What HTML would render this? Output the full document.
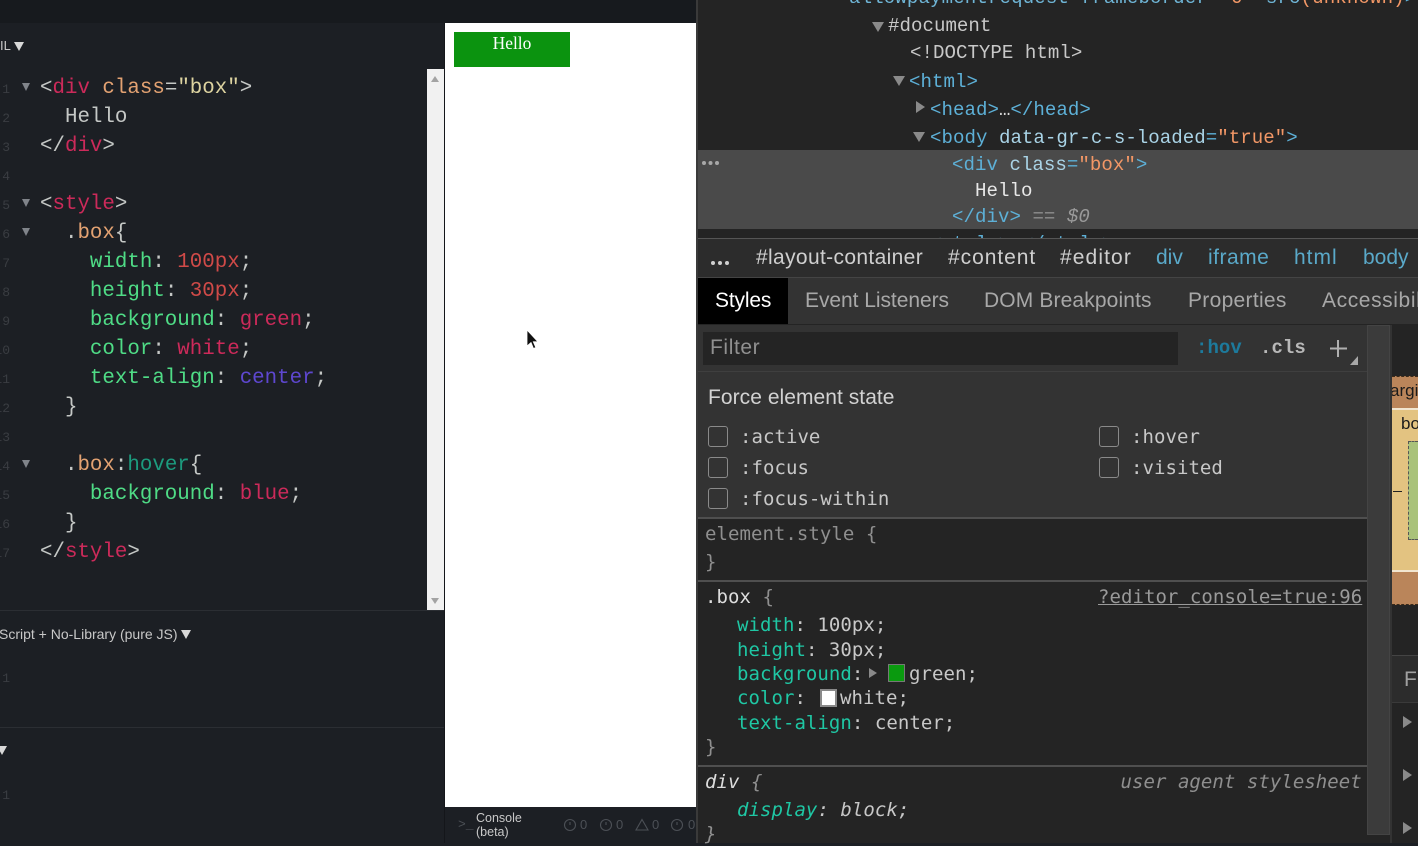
<!DOCTYPE html>
<html><head><meta charset="utf-8"><style>
html,body{margin:0;padding:0;width:1418px;height:843px;overflow:hidden;background:#1c1f24}
div,span.a{position:absolute}
.t{position:absolute;white-space:pre;line-height:24px;height:24px}
.e{font:20.8px/29px "Liberation Mono",monospace;height:29px;line-height:29px;color:#c5c8c6;position:absolute;left:40px;white-space:pre;margin-top:2px}
.n{font:13px/14px "Liberation Mono",monospace;color:#3a3d42;position:absolute;width:20px;text-align:right;left:-10px;margin-top:2px}
.f{position:absolute;left:22px;width:0;height:0;border-left:4.5px solid transparent;border-right:4.5px solid transparent;border-top:8px solid #80848a}
.r{color:#cc2a5a}.o{color:#e3a272}.s{color:#ddd3a0}.g{color:#4fdc86}.v{color:#d04a48}.p{color:#5e47d0}.h{color:#1c9b7e}
.d{font:19.1px/24px "Liberation Mono",monospace;color:#c8c8c8;letter-spacing:.03px}
.m{font:19px/24px "DejaVu Sans Mono",monospace;color:#c8c8c8;letter-spacing:.05px}
.u{font:21px/24px "Liberation Sans",sans-serif;color:#c8c8c8}
.b{color:#5db0d7}.q{color:#f29766}.c{color:#35d4c7}.k{color:#1fc7a4}.y{color:#9a9a9a}
.cb{position:absolute;width:20px;height:21px;box-sizing:border-box;border:1px solid #8a8a8a;border-radius:3px}
.tri{position:absolute;width:0;height:0}
.sep{position:absolute;left:698px;width:669px;height:2px;background:#4f4f4f}
</style></head><body>
<div style="left:0;top:0;width:696px;height:23px;background:#171a1e"></div>
<div class="t" style="left:0;top:34px;font:13px/24px 'Liberation Sans',sans-serif;color:#c8c8c8">IL</div>
<div class="tri" style="left:14px;top:42px;border-left:5px solid transparent;border-right:5px solid transparent;border-top:9px solid #d8d8d8"></div>

<div class="n" style="top:81px">1</div><div class="n" style="top:110px">2</div><div class="n" style="top:139px">3</div><div class="n" style="top:168px">4</div><div class="n" style="top:197px">5</div><div class="n" style="top:226px">6</div><div class="n" style="top:255px">7</div><div class="n" style="top:284px">8</div><div class="n" style="top:313px">9</div><div class="n" style="top:342px">10</div><div class="n" style="top:371px">11</div><div class="n" style="top:400px">12</div><div class="n" style="top:429px">13</div><div class="n" style="top:458px">14</div><div class="n" style="top:487px">15</div><div class="n" style="top:516px">16</div><div class="n" style="top:545px">17</div>
<div class="f" style="top:83px"></div><div class="f" style="top:199px"></div><div class="f" style="top:228px"></div><div class="f" style="top:460px"></div>

<div class="e" style="top:72px">&lt;<span class="r">div</span> <span class="o">class</span>=<span class="s">"box"</span>&gt;</div>
<div class="e" style="top:101px">  Hello</div>
<div class="e" style="top:130px">&lt;/<span class="r">div</span>&gt;</div>
<div class="e" style="top:188px">&lt;<span class="r">style</span>&gt;</div>
<div class="e" style="top:217px">  .<span class="o">box</span>{</div>
<div class="e" style="top:246px">    <span class="g">width</span>: <span class="v">100px</span>;</div>
<div class="e" style="top:275px">    <span class="g">height</span>: <span class="v">30px</span>;</div>
<div class="e" style="top:304px">    <span class="g">background</span>: <span class="r">green</span>;</div>
<div class="e" style="top:333px">    <span class="g">color</span>: <span class="r">white</span>;</div>
<div class="e" style="top:362px">    <span class="g">text-align</span>: <span class="p">center</span>;</div>
<div class="e" style="top:391px">  }</div>
<div class="e" style="top:449px">  .<span class="o">box</span>:<span class="h">hover</span>{</div>
<div class="e" style="top:478px">    <span class="g">background</span>: <span class="r">blue</span>;</div>
<div class="e" style="top:507px">  }</div>
<div class="e" style="top:536px">&lt;/<span class="r">style</span>&gt;</div>

<div style="left:427px;top:69px;width:17px;height:541px;background:#f1f1f1"></div>
<div class="tri" style="left:431px;top:76px;border-left:4.5px solid transparent;border-right:4.5px solid transparent;border-bottom:6px solid #a3a3a3"></div>
<div class="tri" style="left:431px;top:598px;border-left:4.5px solid transparent;border-right:4.5px solid transparent;border-top:6px solid #a3a3a3"></div>
<div style="left:444px;top:23px;width:1px;height:820px;background:#14161a"></div>
<div style="left:0;top:610px;width:444px;height:1px;background:#2b2e33"></div>
<div style="left:0;top:727px;width:444px;height:1px;background:#2b2e33"></div>

<div class="t" style="left:-1px;top:622px;font:14px/24px 'Liberation Sans',sans-serif;color:#c8c8c8">Script + No-Library (pure JS)</div>
<div class="tri" style="left:181px;top:630px;border-left:5px solid transparent;border-right:5px solid transparent;border-top:9px solid #d8d8d8"></div>
<div class="tri" style="left:-3px;top:746px;border-left:5px solid transparent;border-right:5px solid transparent;border-top:9px solid #d8d8d8"></div>
<div class="n" style="top:670px">1</div><div class="n" style="top:787px">1</div>

<div style="left:445px;top:23px;width:251px;height:784px;background:#fff"></div>
<div style="left:454px;top:32px;width:116px;height:35px;background:#0b930f;color:#fff;font:17.4px/22px 'Liberation Serif',serif;text-align:center">Hello</div>
<svg style="position:absolute;left:525px;top:329px" width="14" height="22" viewBox="0 0 14 22"><path d="M2 1V17L6 13.5L8.5 19.5L10.8 18.5L8.3 12.8H13Z" fill="#111" stroke="#fff" stroke-width=".8"/></svg>

<div style="left:445px;top:807px;width:251px;height:36px;background:#1c1f24"></div>
<div class="t" style="left:458px;top:813px;font:13px/24px 'Liberation Mono',monospace;color:#4c5056">&gt;_</div>
<div class="t" style="left:476px;top:811px;font:12.5px/14px 'Liberation Sans',sans-serif;color:#c8c8c8;height:30px">Console
(beta)</div>
<svg style="position:absolute;left:560px;top:815px" width="136" height="20" viewBox="0 0 136 20" fill="none" stroke="#4c5056" stroke-width="1.1"><circle cx="10" cy="10" r="5.5"/><circle cx="46" cy="10" r="5.500"/><path d="M82 4.5L88 15H76Z"/><circle cx="117" cy="10" r="5.5"/><path d="M10 7V10M46 7V10M117 7V10"/></svg>
<div class="t" style="left:580px;top:813px;font:13px/24px 'Liberation Sans',sans-serif;color:#4c5056">0</div>
<div class="t" style="left:616px;top:813px;font:13px/24px 'Liberation Sans',sans-serif;color:#4c5056">0</div>
<div class="t" style="left:652px;top:813px;font:13px/24px 'Liberation Sans',sans-serif;color:#4c5056">0</div>
<div class="t" style="left:688px;top:813px;font:13px/24px 'Liberation Sans',sans-serif;color:#4c5056">0</div>

<!-- devtools -->
<div style="left:696px;top:0;width:722px;height:843px;background:#242424;overflow:hidden"></div>
<div style="left:696px;top:0;width:2px;height:843px;background:#3a3a3a"></div>
<div class="t d" style="left:849px;top:-14px;letter-spacing:.12px"><span style="color:#6fb5d6">allowpaymentrequest</span> <span style="color:#6fb5d6">frameborder</span>=<span class="q">"0"</span> <span style="color:#6fb5d6">src</span><span class="q">(unknown)</span><span class="b">&gt;</span></div>
<div class="tri" style="left:872px;top:22px;border-left:6px solid transparent;border-right:6px solid transparent;border-top:10px solid #8a8a8a"></div>
<div class="t d" style="left:888px;top:14px">#document</div>
<div class="t d" style="left:910px;top:41px">&lt;!DOCTYPE html&gt;</div>
<div class="tri" style="left:893px;top:76px;border-left:6px solid transparent;border-right:6px solid transparent;border-top:10px solid #8a8a8a"></div>
<div class="t d b" style="left:909px;top:70px">&lt;html&gt;</div>
<div class="tri" style="left:916px;top:101px;border-top:6px solid transparent;border-bottom:6px solid transparent;border-left:9px solid #8a8a8a"></div>
<div class="t d b" style="left:930px;top:98px">&lt;head&gt;<span style="color:#ddd;letter-spacing:-3px">…</span><span style="margin-left:3px">&lt;/head&gt;</span></div>
<div class="tri" style="left:913px;top:132px;border-left:6px solid transparent;border-right:6px solid transparent;border-top:10px solid #8a8a8a"></div>
<div class="t d" style="left:930px;top:126px;letter-spacing:.03px"><span class="b">&lt;body</span> <span style="color:#a9d3e6">data-gr-c-s-loaded</span><span class="b">=</span><span class="q">"true"</span><span class="b">&gt;</span></div>

<div style="left:698px;top:150px;width:720px;height:79px;background:#4a4a4a"></div>
<svg style="position:absolute;left:700px;top:159px" width="22" height="8" viewBox="0 0 22 8" fill="#a8a8a8"><circle cx="4" cy="4" r="2"/><circle cx="10.500" cy="4" r="2"/><circle cx="17" cy="4" r="2"/></svg>
<div class="t d" style="left:952px;top:153px"><span class="b">&lt;div</span> <span style="color:#a9d3e6">class</span><span class="b">=</span><span class="q">"box"</span><span class="b">&gt;</span></div>
<div class="t d" style="left:975px;top:179px;color:#e8e8e8">Hello</div>
<div class="t d" style="left:952px;top:205px"><span class="b">&lt;/div&gt;</span> <span style="color:#8e8e8e">==</span> <span style="color:#9a9a9a;font-style:italic">$0</span></div>

<div style="left:698px;top:229px;width:720px;height:9px;overflow:hidden"><span class="t d b" style="left:232px;top:3px">&lt;style&gt;…&lt;/style&gt;</span></div>

<div style="left:698px;top:238px;width:720px;height:40px;background:#2c2c2c;border-top:1px solid #555;box-sizing:border-box;border-bottom:1px solid #444"></div>
<svg style="position:absolute;left:709px;top:259px" width="22" height="8" viewBox="0 0 22 8" fill="#d0d0d0"><circle cx="4" cy="4" r="2"/><circle cx="11" cy="4" r="2"/><circle cx="18" cy="4" r="2"/></svg>
<div class="t u" style="left:756px;top:246px;letter-spacing:.35px;color:#cfcfcf">#layout-container</div>
<div class="t u" style="left:948px;top:246px;letter-spacing:.95px;color:#cfcfcf">#content</div>
<div class="t u" style="left:1060px;top:246px;letter-spacing:1.1px;color:#cfcfcf">#editor</div>
<div class="t u b" style="left:1156px;top:246px;color:#5aa9c9">div</div>
<div class="t u b" style="left:1208px;top:246px;color:#5aa9c9;letter-spacing:.5px">iframe</div>
<div class="t u b" style="left:1294px;top:246px;color:#5aa9c9;letter-spacing:1px">html</div>
<div class="t u b" style="left:1363px;top:246px;color:#5aa9c9">body</div>

<div style="left:698px;top:278px;width:720px;height:46px;background:#333"></div>
<div style="left:698px;top:278px;width:90px;height:46px;background:#000"></div>
<div class="t u" style="left:715px;top:289px;color:#fff;letter-spacing:-.15px">Styles</div>
<div class="t u" style="left:805px;top:289px;color:#a8a8a8;letter-spacing:-.05px">Event Listeners</div>
<div class="t u" style="left:984px;top:289px;color:#a8a8a8;letter-spacing:.13px">DOM Breakpoints</div>
<div class="t u" style="left:1188px;top:289px;color:#a8a8a8;letter-spacing:.3px">Properties</div>
<div class="t u" style="left:1322px;top:289px;color:#a8a8a8;letter-spacing:.6px">Accessibility</div>

<div style="left:698px;top:325px;width:669px;height:46px;background:#333"></div>
<div style="left:703px;top:332px;width:475px;height:33px;background:#242424"></div>
<div class="t u" style="left:710px;top:336px;color:#909090;letter-spacing:.6px">Filter</div>
<div class="t m" style="left:1196px;top:336px;font-weight:bold;color:#1d7a9c;font-family:'Liberation Mono',monospace">:hov</div>
<div class="t m" style="left:1260px;top:336px;font-weight:bold;color:#b8b8b8;font-family:'Liberation Mono',monospace">.cls</div>
<svg style="position:absolute;left:1328px;top:338px" width="32" height="30" viewBox="0 0 32 30"><path d="M10 2V19M2 10.500H19" stroke="#b0b0b0" stroke-width="2" fill="none"/><path d="M22 27H30V18Z" fill="#a8a8a8"/></svg>

<div style="left:698px;top:372px;width:669px;height:146px;background:#333"></div>
<div style="left:698px;top:371px;width:669px;height:1px;background:#3f3f3f"></div>
<div class="t u" style="left:708px;top:386px;color:#d2d2d2;letter-spacing:.05px">Force element state</div>
<div class="cb" style="left:708px;top:426px"></div><div class="cb" style="left:708px;top:457px"></div><div class="cb" style="left:708px;top:488px"></div>
<div class="cb" style="left:1099px;top:426px"></div><div class="cb" style="left:1099px;top:457px"></div>
<div class="t m" style="left:740px;top:425px">:active</div>
<div class="t m" style="left:740px;top:456px">:focus</div>
<div class="t m" style="left:740px;top:487px">:focus-within</div>
<div class="t m" style="left:1131px;top:425px">:hover</div>
<div class="t m" style="left:1131px;top:456px">:visited</div>

<div class="sep" style="top:517px"></div>
<div class="t m" style="left:705px;top:522px;color:#8f8f8f">element.style {</div>
<div class="t m" style="left:705px;top:550px;color:#8f8f8f">}</div>
<div class="sep" style="top:580px"></div>
<div class="t m" style="left:705px;top:585px"><span style="color:#ddd">.box</span> <span style="color:#8f8f8f">{</span></div>
<div class="t m" style="left:1098px;top:585px;color:#9a9a9a;text-decoration:underline">?editor_console=true:96</div>
<div class="t m" style="left:737px;top:613px"><span class="k">width</span>: 100px;</div>
<div class="t m" style="left:737px;top:638px"><span class="k">height</span>: 30px;</div>
<div class="t m" style="left:737px;top:662px"><span class="k">background</span>:</div>
<div class="tri" style="left:869px;top:668px;border-top:5.500px solid transparent;border-bottom:5.500px solid transparent;border-left:8px solid #8a8a8a"></div>
<div style="left:888px;top:664px;width:17px;height:18px;box-sizing:border-box;background:#0a9a0f;border:1px solid #777"></div>
<div class="t m" style="left:909px;top:662px">green;</div>
<div class="t m" style="left:737px;top:686px"><span class="k">color</span>:</div>
<div style="left:820px;top:689px;width:17px;height:18px;box-sizing:border-box;background:#fff;border:2px solid #8a8a8a"></div>
<div class="t m" style="left:840px;top:686px">white;</div>
<div class="t m" style="left:737px;top:711px"><span class="k">text-align</span>: center;</div>
<div class="t m" style="left:705px;top:735px;color:#8f8f8f">}</div>
<div class="sep" style="top:765px"></div>
<div class="t m" style="left:705px;top:770px;font-style:italic"><span style="color:#ddd">div</span> <span style="color:#8f8f8f">{</span></div>
<div class="t m" style="left:1120.500px;top:770px;font-style:italic;color:#8f8f8f">user agent stylesheet</div>
<div class="t m" style="left:737px;top:798px;font-style:italic"><span class="k">display</span>: block;</div>
<div class="t m" style="left:705px;top:822px;font-style:italic;color:#8f8f8f">}</div>

<div style="left:1367px;top:325px;width:23px;height:510px;background:#3b3b3b;border:1px solid #444;box-sizing:border-box"></div>
<div style="left:1390px;top:325px;width:2px;height:518px;background:#333"></div>

<!-- box model -->
<div style="left:1392px;top:376px;width:26px;height:32px;background:#ba855a;overflow:hidden"><span class="t" style="left:-2px;top:3px;font:17px/24px 'Liberation Sans',sans-serif;color:#1a1a1a">argin</span></div>
<div style="left:1392px;top:376px;width:26px;height:0;border-top:1px dashed #3a2a1a"></div>
<div style="left:1392px;top:408px;width:26px;height:2px;background:#f2e6d0"></div>
<div style="left:1392px;top:410px;width:26px;height:160px;background:#e3c381"></div>
<div class="t" style="left:1401px;top:412px;font:17px/24px 'Liberation Sans',sans-serif;color:#1a1a1a">bo</div>
<div style="left:1408px;top:441px;width:10px;height:99px;background:#a9c27a;border:1px dashed #555;border-right:0;box-sizing:border-box"></div>
<div style="left:1393px;top:491px;width:9px;height:1px;background:#222"></div>
<div style="left:1392px;top:570px;width:26px;height:2px;background:#f2e6d0"></div>
<div style="left:1392px;top:572px;width:26px;height:33px;background:#ba855a"></div>
<div style="left:1392px;top:604px;width:26px;height:0;border-top:1px dashed #3a2a1a"></div>
<div style="left:1392px;top:655px;width:26px;height:48px;background:#2c2c2c;border-top:1px solid #444;border-bottom:1px solid #3a3a3a;box-sizing:border-box"></div>
<div class="t u" style="left:1404px;top:668px;color:#a0a0a0">Fi</div>
<div class="tri" style="left:1403px;top:716px;border-top:6px solid transparent;border-bottom:6px solid transparent;border-left:9px solid #8a8a8a"></div>
<div class="tri" style="left:1403px;top:769px;border-top:6px solid transparent;border-bottom:6px solid transparent;border-left:9px solid #8a8a8a"></div>
<div class="tri" style="left:1403px;top:822px;border-top:6px solid transparent;border-bottom:6px solid transparent;border-left:9px solid #8a8a8a"></div>
</body></html>
